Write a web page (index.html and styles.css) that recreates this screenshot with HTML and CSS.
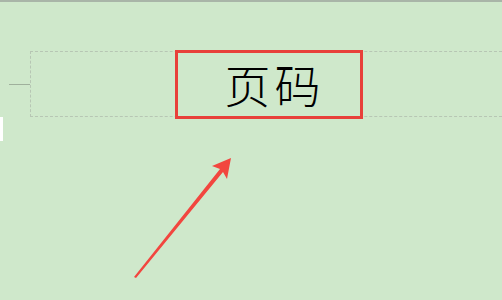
FILE: index.html
```html
<!DOCTYPE html>
<html lang="zh">
<head>
<meta charset="utf-8">
<link rel="stylesheet" href="styles.css">
</head>
<body>
<div class="page">
  <div class="topline"></div>
  <div class="header">
    <div class="tick"></div>
    <div class="zone">
      <div class="label">页码</div>
    </div>
  </div>
  <div class="tab"></div>
  <svg class="arrow" width="502" height="300" viewBox="0 0 502 300">
    <path d="M134 277 L220 169 L212 166 L231 158 L227 179 L223 172 L136 278 Z" fill="#f2463f"/>
  </svg>
</div>
</body>
</html>
```
FILE: styles.css
```css
html, body {
  margin: 0;
  padding: 0;
}
body {
  width: 502px;
  height: 300px;
  overflow: hidden;
  background: #cfe8cb;
}
.page {
  position: relative;
  width: 502px;
  height: 300px;
}
.topline {
  height: 2px;
  background: #a9b5a8;
}
.header {
  display: flex;
  align-items: center;
  margin-top: 49px;
  height: 66px;
}
.tick {
  width: 21px;
  height: 1px;
  margin-left: 9px;
  background: #9fb09c;
  align-self: center;
}
.zone {
  flex: 1;
  height: 64px;
  border-top: 1px dashed #b7c6b4;
  border-bottom: 1px dashed #b7c6b4;
  border-left: 1px dashed #b7c6b4;
  display: flex;
  align-items: center;
}
.label {
  margin-left: 144px;
  width: 171px;
  height: 61px;
  border: 3px solid #e8403a;
  display: flex;
  align-items: center;
  justify-content: center;
  padding-left: 11px;
  padding-bottom: 2px;
  box-sizing: content-box;
  font-family: "Noto Sans CJK SC", sans-serif;
  font-weight: 300;
  font-size: 46px;
  letter-spacing: 4px;
  color: #000;
  line-height: 1;
}
.tab {
  width: 3px;
  height: 24px;
  background: #ffffff;
}
.arrow {
  position: absolute;
  left: 0;
  top: 0;
  pointer-events: none;
}
```
